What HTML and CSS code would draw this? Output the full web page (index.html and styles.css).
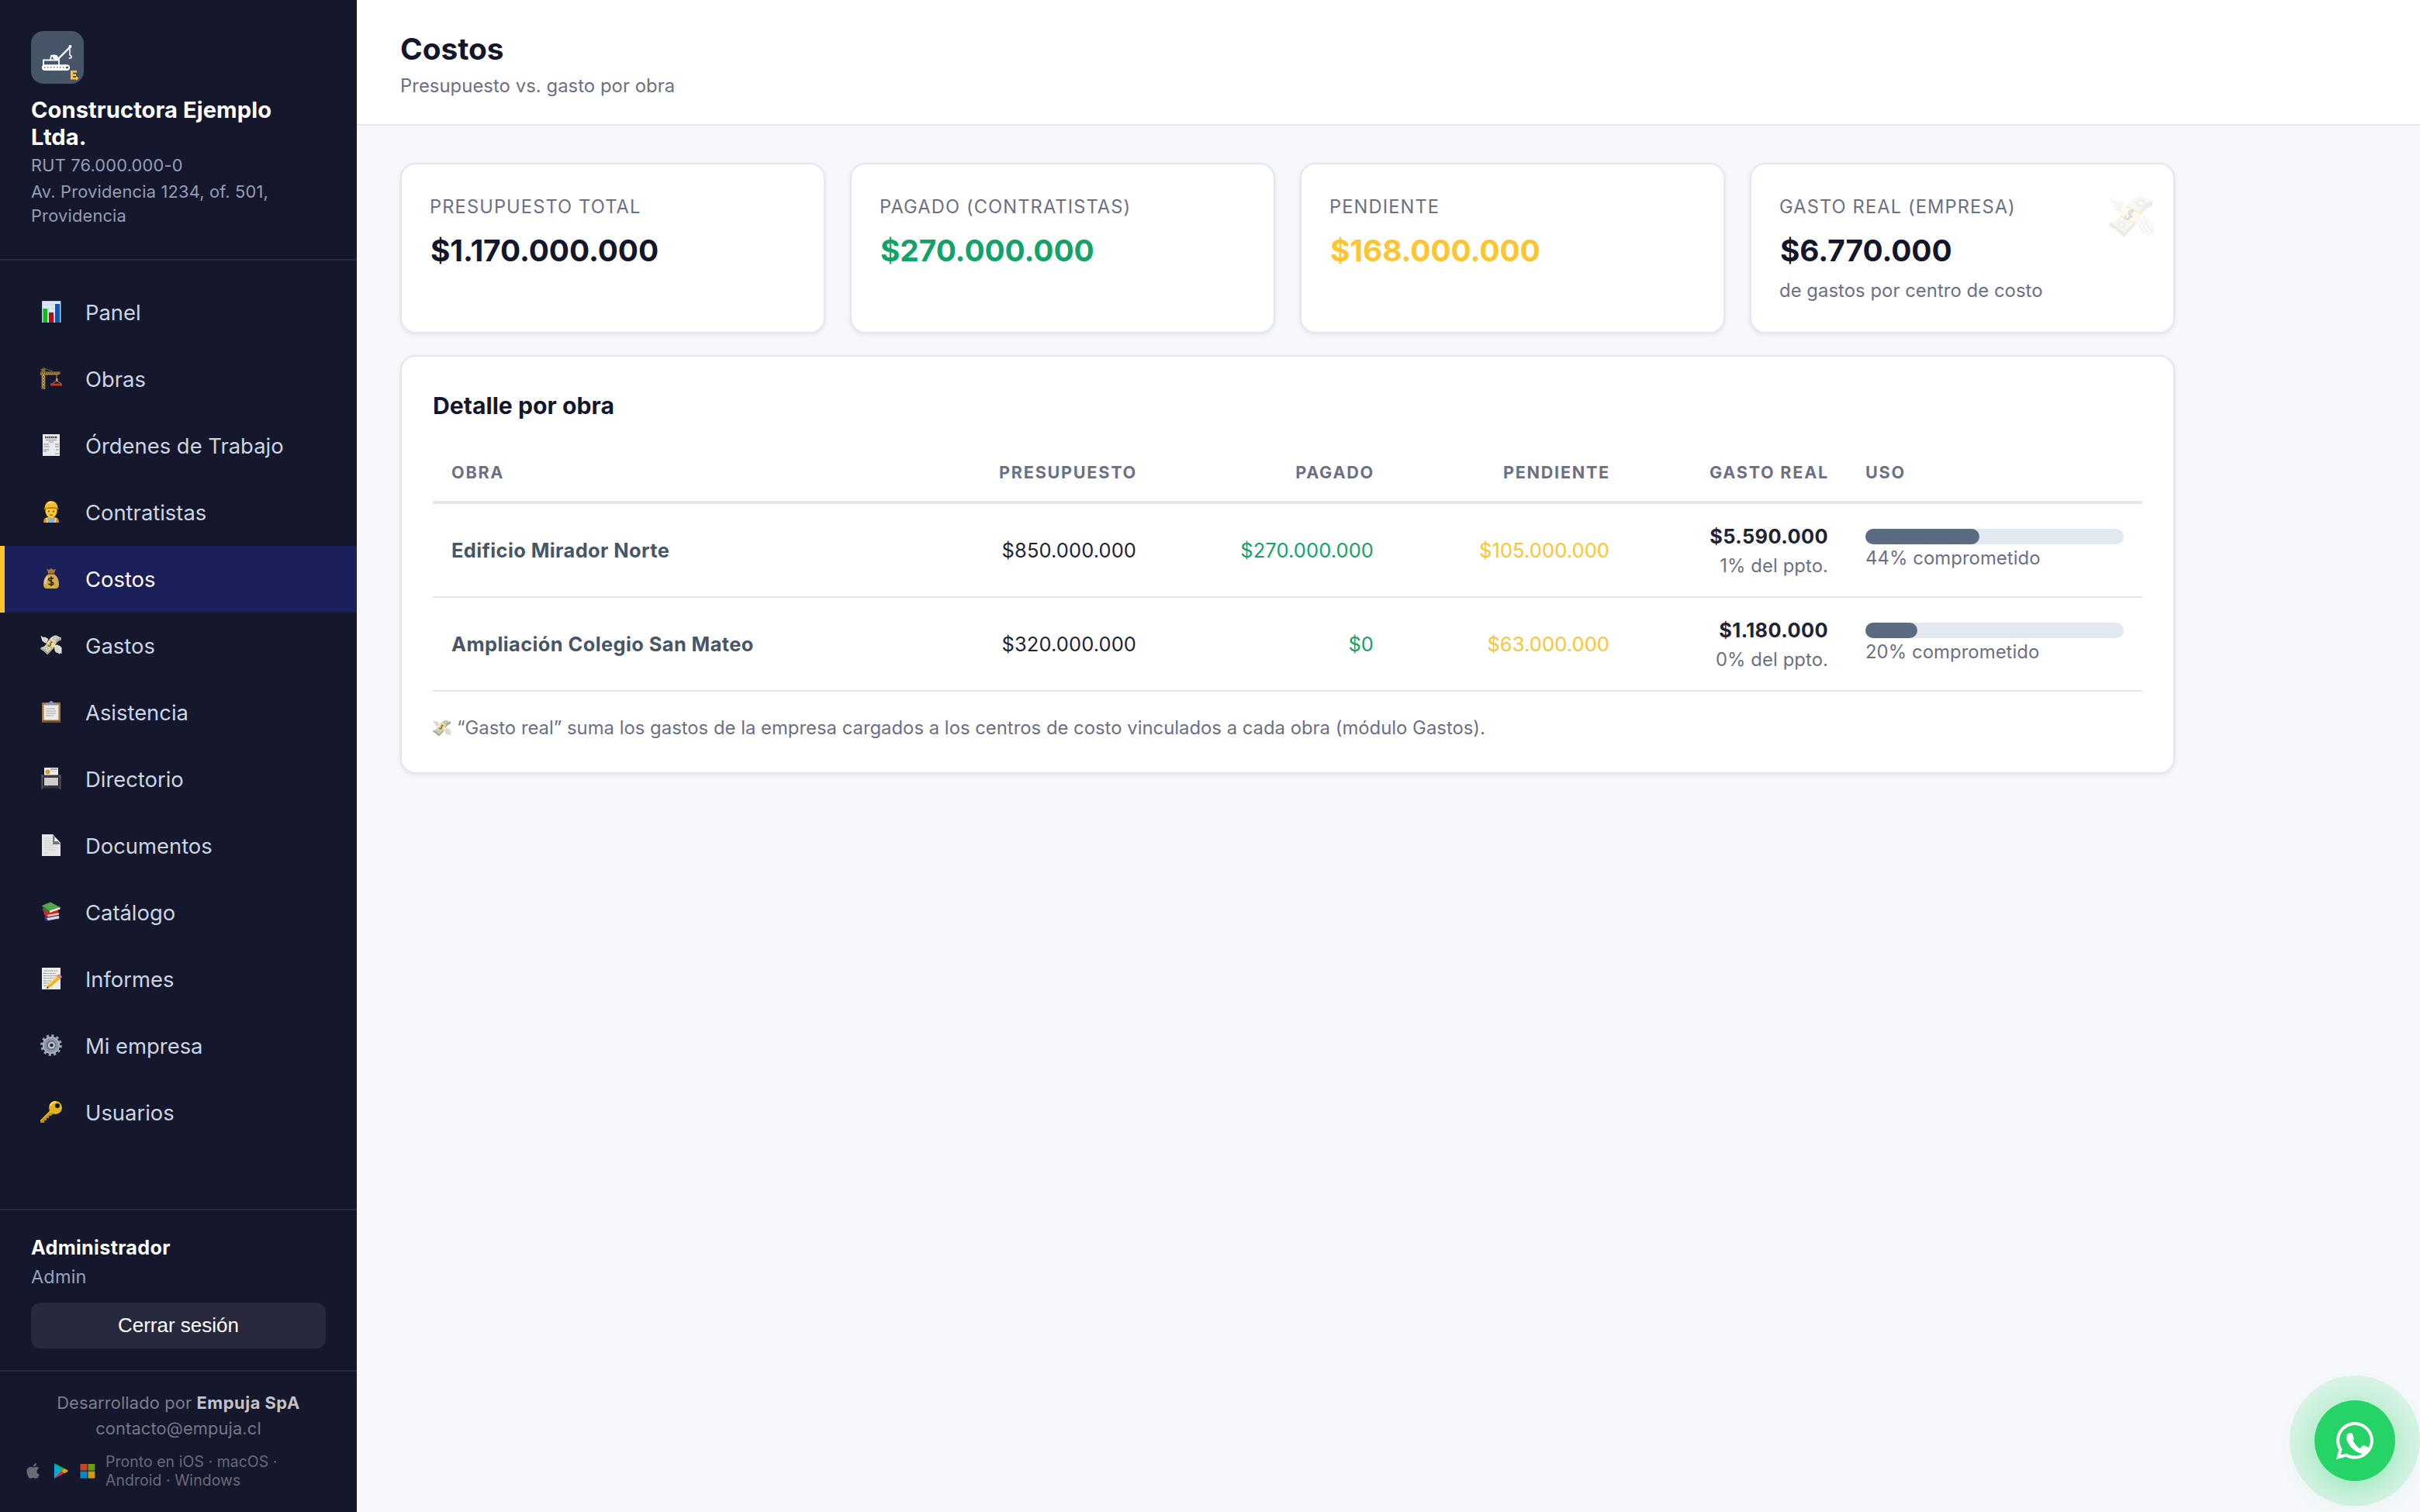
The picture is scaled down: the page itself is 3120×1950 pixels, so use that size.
FILE: index.html
```
<!DOCTYPE html>
<html lang="es">
<head>
<meta charset="utf-8">
<title>Costos</title>
<link rel="stylesheet" href="styles.css">
</head>
<body>
<svg class="defs" aria-hidden="true">
  <symbol id="money" viewBox="0 0 60 60">
    <path d="M1 4 8 8 14 8 22 13 18 24 12 24 9 21 5 18 4 14z" fill="#e4e3da"/>
    <path d="M5 10l12 4M8 15l9 3M11 20l7 1" stroke="#b5b3a5" stroke-width="1.2"/>
    <path d="M38 31 46 29 54 32 59 37 59 54 55 52 52 55 48 51 44 51 40 46z" fill="#e4e3da"/>
    <path d="M47 34l10 16M43 37l8 13M41 42l6 8" stroke="#b5b3a5" stroke-width="1.2"/>
    <path d="M24 15Q32 3 44 3Q52 8 57 9L57 16Q49 17 43 26z" fill="#d8dbcc"/>
    <path d="M57 9v7Q49 17 43 26l-2-3Q47 11 57 9z" fill="#a3a794"/>
    <ellipse cx="42" cy="12" rx="7" ry="5" fill="#b4bba4"/><circle cx="42" cy="12" r="2.6" fill="#e2e5d8"/>
    <path d="M15 29 35 40 20 56 Q12 47 1 41L2 36Q9 37 15 29z" fill="#d3d6c6"/>
    <path d="M20 56Q12 47 1 41L2 37Q13 42 20 50L33 38 35 40z" fill="#9da18e"/>
    <ellipse cx="17" cy="40" rx="6" ry="4.5" fill="#b4bba4"/><circle cx="17" cy="40" r="2.4" fill="#e2e5d8"/>
    <path d="M24 15 44 25 35 40 15 29z" fill="#eee2b4"/>
    <path d="M24 15 44 25 43 27.500 23 17zM16.500 26.500 36.500 37.500 35 40 15 29z" fill="#e9b93c"/>
    <path d="M33 23Q29 19 27 23T29 28T26 32T23 28M32 20 25 34" fill="none" stroke="#55503a" stroke-width="2"/>
  </symbol>
</svg>
<div class="app">
  <aside class="sidebar">
    <div class="brand">
      <svg class="logo" viewBox="0 0 68 68">
        <rect width="68" height="68" rx="16" fill="#475569"/>
        <g fill="none" stroke="#fff" stroke-width="1.800">
          <path d="M16 44V37.500H25L26 32Q29 31 33 32L36 37V44M25 37.500H36"/>
          <path d="M34 37 50 21" stroke-width="2.400"/>
          <path d="M50 20V31Q52.500 32 52 34Q50.500 36 49 34.500" stroke-width="1.500"/>
        </g>
        <circle cx="50.500" cy="20" r="2" fill="#fff"/><path d="M27 32h6l4 5-3 1-5-2z" fill="#fff"/>
        <rect x="14" y="43.300" width="36" height="7.700" rx="3.800" fill="#fff"/>
        <path d="M17 47h29" stroke="#8b95a3" stroke-width="2.200" stroke-dasharray="1.500 2.500"/>
        <circle cx="46.500" cy="47" r="1.600" fill="#475569"/>
        <path d="M51 51h8v2.600h-5v1.900h4v2.500h-4v2h4v-2l3.500 3-3.500 3v-1.400h-7z" fill="#ffc42e"/>
      </svg>
      <div class="brand-name">Constructora Ejemplo Ltda.</div>
      <div class="brand-rut">RUT 76.000.000-0</div>
      <div class="brand-address">Av. Providencia 1234, of. 501, Providencia</div>
    </div>
    <nav class="nav">
      <a class="nav-item"><svg class="ico" viewBox="0 0 28 28"><path d="M2 0h24v28H2z" fill="#dfe7f0"/><path d="M2 5h24M2 10h24M2 15h24M2 20h24" stroke="#c3d0df" stroke-width=".6"/><path d="M3.500 10H9v18H3.500z" fill="#12b81c"/><path d="M11 15h6v13h-6z" fill="#b80d12"/><path d="M19 4h6v24h-6z" fill="#0b59bd"/><path d="M2 .5h24V28M2.500 0v28" fill="none" stroke="#b9c4d3"/></svg>Panel</a>
      <a class="nav-item"><svg class="ico" viewBox="0 0 28 28"><path d="M1.500 28V2H6.500V28z" fill="#7d6235"/><path d="M2 8l4 4-4 4 4 4-4 4 4 3M6 8l-4 4 4 4-4 4 4 4" fill="none" stroke="#d0a95c" stroke-width=".9"/><path d="M0 5.500h25.500v3L22 9.500H0z" fill="#a6813f"/><path d="M1 7h23" stroke="#5d4726" stroke-dasharray="1 1.500" stroke-width="2"/><path d="M0 3 5 1 16 5M4 0v5" fill="none" stroke="#8b7850" stroke-width=".8"/><path d="M21 9v9M15 21l6-4 6 4" fill="none" stroke="#9a9a9a" stroke-width=".9"/><path d="M20 14h2.500v4H20z" fill="#c9a03a"/><path d="M13 20.500h15V23.500H13z" fill="#c4371d"/></svg>Obras</a>
      <a class="nav-item"><svg class="ico" viewBox="0 0 28 28"><path d="M3 0h22v28H3z" fill="#e9eaec"/><path d="M6 4h16" stroke="#4b4b50" stroke-width="2.600" stroke-dasharray="2 .6"/><path d="M7 7.500h14M11 10h6M4 13h7M19 13h5M4 16h8M19 16h5M4 20h7M20 20h4M4 22h4M19 25h5" stroke="#8c8c92" stroke-width="1.100"/></svg>Órdenes de Trabajo</a>
      <a class="nav-item"><svg class="ico" viewBox="0 0 28 28"><path d="M4 28Q4 21 10 21h8q6 0 6 7z" fill="#f08522"/><path d="M10 21h8l1 7H9z" fill="#76b9ec"/><path d="M8 22l1 6M20 22l-1 6" stroke="#f5ec54" stroke-width="1.600"/><path d="M11 18h6v4l-3 2-3-2z" fill="#e6a91c"/><path d="M6.500 9h15v5q-1 7-7.500 8-6.500-1-7.500-8z" fill="#fbc931"/><path d="M5.500 10Q6 0 14 0t8.500 10q-8.500-2-17 0z" fill="#f3bd24"/><path d="M4.500 9.500q9.500-3 19 0v1.500q-9.500-2-19 0z" fill="#bb7b14"/><path d="M10 3Q14 1 17 3" stroke="#ffe47c" stroke-width="1.500" fill="none"/><circle cx="11" cy="13.500" r="1" fill="#4d2d14"/><circle cx="17" cy="13.500" r="1" fill="#4d2d14"/><path d="M12 18.300h4" stroke="#a4420e" stroke-width="1.200"/></svg>Contratistas</a>
      <a class="nav-item active"><svg class="ico" viewBox="0 0 28 28"><path d="M8 1.500 11 3l3-2 3 2 3-1.500L17.500 8h-7z" fill="#a87b32"/><path d="M10.500 8h7Q24 13 24 21q0 6-4 6H8q-4 0-4-6 0-8 6.500-13z" fill="#d2ab49"/><path d="M9 12Q6 16 6.500 21" stroke="#f0d685" stroke-width="2" fill="none"/><path d="M10 8h8" stroke="#7b511a" stroke-width="1.800"/><path d="M17 14.500Q14 12.500 11.500 14T13.500 17.700T16.500 21.500T10.500 21M14 11.500V24" fill="none" stroke="#30291b" stroke-width="1.700"/></svg>Costos</a>
      <a class="nav-item"><svg class="ico" viewBox="0 0 60 60"><use href="#money"/></svg>Gastos</a>
      <a class="nav-item"><svg class="ico" viewBox="0 0 28 28"><path d="M2 2h24v26H2z" fill="#a8763a"/><path d="M2 25.500h24V28H2z" fill="#7d4f1d"/><path d="M4.500 5h19v19.500h-19z" fill="#ebebeb"/><path d="M7 10h12M7 13h13M7 16h13M7 19h10" stroke="#c9c9c9" stroke-width="2"/><path d="M6 5.500V3.500Q8 1.500 11.500 2q.5-2 2.500-2t2.500 2Q20 1.500 22 3.500v2z" fill="#8a93a8"/></svg>Asistencia</a>
      <a class="nav-item"><svg class="ico" viewBox="0 0 28 28"><path d="M5 0h18v12H5z" fill="#f0eff0"/><circle cx="9.500" cy="5.500" r="3" fill="#e39a1c"/><path d="M13 2h9" stroke="#686868"/><path d="M14 5h7" stroke="#c8c8c8"/><path d="M5 12h18v12H5z" fill="#cfccd0"/><path d="M1 9.500h26v3.500H1z" fill="#3a3a3d"/><path d="M2.500 9v18.500M25.500 9v18.500" stroke="#54555a" stroke-width="2"/><path d="M4 23h20v3.500H4z" fill="#37373a"/></svg>Directorio</a>
      <a class="nav-item"><svg class="ico" viewBox="0 0 28 28"><path d="M2 0h14l10 11v17H2z" fill="#e6e6e7"/><path d="M5 5h8M5 8h8M5 11h9M5 14h17M5 17h17M5 20h15M5 24h5" stroke="#cfcfd0" stroke-width="1"/><path d="M16 0 26 13H16z" fill="#77777a"/><path d="M15 0Q20 2 18 9 24 8 26 11z" fill="#fafafa"/></svg>Documentos</a>
      <a class="nav-item"><svg class="ico" viewBox="0 0 28 28"><path d="M2 10 5 9 25 20v3L9 26Q4 24 6 20z" fill="#303e90"/><path d="M8 22 24 19v3.500L10 25z" fill="#dcdcdf"/><path d="M4 9h19v6l1 3-15 3.500Q4 18 4 9z" fill="#d9261d"/><path d="M9 18 24 15.500v2L10 20z" fill="#e9e7e5"/><path d="M2 6 13 1.500 25.500 8 12 13z" fill="#52a84a"/><path d="M2 6 12 13v3Q3 11 2 6z" fill="#2e7a2e"/><path d="M12 12.500 25.500 8v2.500L12 15z" fill="#efefe8"/></svg>Catálogo</a>
      <a class="nav-item"><svg class="ico" viewBox="0 0 28 28"><path d="M2 0h24v28H2z" fill="#ececec"/><path d="M5 4h17M4 7.500h16M4 10.500h18M4 13.500h13M4 17h10M4 20h7M4 23h5" stroke="#98989b" stroke-width="1.100" stroke-dasharray="4 .8 2 .7"/><path d="M8 27 10.500 21 21 10.500 25 14.500 14 24.500z" fill="#eeb021"/><path d="M10.500 21 21 10.500l1.500 1.500L12 22.500z" fill="#ffd552"/><path d="M8 27 9 24l2 2z" fill="#333"/><path d="M21 10.500 23 8.500Q25 8 27 10.500T26.500 13L25 14.500z" fill="#e8808a"/></svg>Informes</a>
      <a class="nav-item"><svg class="ico" viewBox="0 0 28 28"><circle cx="14" cy="14" r="12.300" fill="none" stroke="#97a1ae" stroke-width="3.200" stroke-dasharray="3.200 3.240"/><circle cx="14" cy="14" r="8.500" fill="none" stroke="#8c95a2" stroke-width="5"/><circle cx="14" cy="14" r="10.300" fill="none" stroke="#b3bcc7" stroke-width="1.200"/><circle cx="14" cy="14" r="6" fill="#6d7783"/><circle cx="14.500" cy="14" r="4.600" fill="#b9c4cf"/><circle cx="14.500" cy="14" r="2.300" fill="#22283a"/></svg>Mi empresa</a>
      <a class="nav-item"><svg class="ico" viewBox="0 0 28 28"><path d="M13 12 0 25v3h5v-3h3v-3h3v-3h3l4-4z" fill="#c08d10"/><path d="M13 12 0 25v1L15 13z" fill="#ecc52c"/><circle cx="19.500" cy="8.500" r="8.500" fill="#e3b317"/><path d="M12.500 6Q15 1 20 1.200" fill="none" stroke="#ffe25a" stroke-width="2"/><circle cx="22" cy="6" r="3" fill="#15182d"/></svg>Usuarios</a>
    </nav>
    <div class="user">
      <div class="user-name">Administrador</div>
      <div class="user-role">Admin</div>
      <button class="logout">Cerrar sesión</button>
    </div>
    <div class="credits">
      <div class="credit-line">Desarrollado por <b>Empuja SpA</b></div>
      <div class="credit-line mail">contacto@empuja.cl</div>
      <div class="stores">
        <svg viewBox="0 0 20 20" width="20" height="20"><path d="M14.500 10.500c0-2 1-3 2.800-4-1-1.500-2.500-1.800-3.600-1.800-1.500 0-2.700.9-3.500.9S8 4.700 6.700 4.700C3.800 4.800 1.500 7 1.500 10.800c0 4 2.700 9 5 9 1.200 0 1.900-.8 3.500-.8s2.200.8 3.500.8c2 0 3.600-3 4.300-5-2-.8-3.300-2.200-3.300-4.300zM12.800 3.200C13.700 2.200 14 1 14 0c-2.500.4-4.200 2.300-4 4.500 1.100 0 2.100-.5 2.800-1.300z" fill="#696b77"/></svg>
        <svg viewBox="0 0 20 20" width="20" height="20"><path d="M2 0 12 10 2 20z" fill="#08a9d6"/><path d="M2 0 15 7l-3.500 3.500z" fill="#0bb863"/><path d="M2 20 15 13l-3.500-3.500z" fill="#cf3142"/><path d="M15 6.800 19 9q1.500 1 0 2l-4 2.300L11.500 10z" fill="#d9a70c"/></svg>
        <svg viewBox="0 0 20 20" width="20" height="20"><path d="M.5 1h9v8.500h-9z" fill="#c84524"/><path d="M10.500 1h8.800v8.500h-8.800z" fill="#6a9e0c"/><path d="M.5 10.500h9v9h-9z" fill="#0786c8"/><path d="M10.500 10.500h8.800v9h-8.800z" fill="#d29a0b"/></svg>
        <div class="stores-text">Pronto en iOS · macOS ·<br>Android · Windows</div>
      </div>
    </div>
  </aside>

  <main class="main">
    <header class="header">
      <h1>Costos</h1>
      <p>Presupuesto vs. gasto por obra</p>
    </header>
    <div class="content">
      <section class="stats">
        <div class="stat"><div class="label">Presupuesto total</div><div class="value">$1.170.000.000</div></div>
        <div class="stat"><div class="label">Pagado (contratistas)</div><div class="value green">$270.000.000</div></div>
        <div class="stat"><div class="label">Pendiente</div><div class="value yellow">$168.000.000</div></div>
        <div class="stat"><div class="label">Gasto real (empresa)</div><div class="value">$6.770.000</div><div class="hint">de gastos por centro de costo</div><svg class="watermark" viewBox="0 0 60 60"><use href="#money"/></svg></div>
      </section>
      <section class="panel">
        <h2>Detalle por obra</h2>
        <table>
          <colgroup><col class="c-obra"><col class="c-ppto"><col class="c-pag"><col class="c-pend"><col class="c-real"><col class="c-uso"></colgroup>
          <thead><tr><th>Obra</th><th class="r">Presupuesto</th><th class="r">Pagado</th><th class="r">Pendiente</th><th class="r">Gasto real</th><th>Uso</th></tr></thead>
          <tbody>
            <tr><td class="name">Edificio Mirador Norte</td><td class="r">$850.000.000</td><td class="r green">$270.000.000</td><td class="r yellow">$105.000.000</td><td class="r"><div class="real">$5.590.000</div><div class="small">1% del ppto.</div></td><td><div class="bar"><div class="fill" style="width:44%"></div></div><div class="small">44% comprometido</div></td></tr>
            <tr><td class="name">Ampliación Colegio San Mateo</td><td class="r">$320.000.000</td><td class="r green">$0</td><td class="r yellow">$63.000.000</td><td class="r"><div class="real">$1.180.000</div><div class="small">0% del ppto.</div></td><td><div class="bar"><div class="fill" style="width:20%"></div></div><div class="small">20% comprometido</div></td></tr>
          </tbody>
        </table>
        <p class="note"><svg viewBox="0 0 60 60" width="24" height="24"><use href="#money"/></svg><span>“Gasto real” suma los gastos de la empresa cargados a los centros de costo vinculados a cada obra (módulo Gastos).</span></p>
      </section>
    </div>
  </main>
</div>
<a class="whatsapp"><svg viewBox="0 32 448 448" width="48" height="48" fill="#fff"><path d="M380.900 97.100C339 55.100 283.200 32 223.900 32c-122.400 0-222 99.600-222 222 0 39.100 10.200 77.300 29.600 111L0 480l117.700-30.900c32.400 17.700 68.900 27 106.100 27h.1c122.300 0 224.100-99.600 224.100-222 0-59.300-25.200-115-67.100-157zm-157 341.600c-33.200 0-65.700-8.900-94-25.700l-6.700-4-69.800 18.300L72 359.200l-4.400-7c-18.500-29.400-28.200-63.300-28.200-98.200 0-101.700 82.800-184.500 184.600-184.500 49.300 0 95.600 19.200 130.400 54.100 34.800 34.900 56.200 81.200 56.100 130.500 0 101.800-84.900 184.600-186.600 184.600z"/><path d="M170 162Q124 166 121 215Q121 268 172 328Q225 388 290 408Q338 422 368 392L402 346Q352 312 323 314Q310 318 286 349Q248 330 205 262Q204 250 212 232Q208 200 190 168Q184 160 170 162z"/></svg></a>
</body>
</html>
```
FILE: styles.css
```
* { box-sizing: border-box; margin: 0; padding: 0; }

body {
  font-family: Inter, "Liberation Sans", sans-serif;
  background: #f7f8fc;
  color: #1f2336;
}

.defs { display: none; }

.app { display: flex; height: 1950px; }

/* Sidebar */
.sidebar {
  width: 460px;
  flex: none;
  display: flex;
  flex-direction: column;
  background: #15182d;
}

.brand {
  height: 336px;
  padding: 40px 40px 0;
  border-bottom: 2px solid rgba(255, 255, 255, .08);
}
.logo { display: block; width: 68px; height: 68px; }
.brand-name {
  margin-top: 16px;
  font-size: 29.1px;
  font-weight: 700;
  line-height: 35px;
  letter-spacing: .08px;
  color: #fff;
}
.brand-rut, .brand-address {
  font-size: 21.8px;
  letter-spacing: .2px;
  color: #949db3;
}
.brand-rut { margin-top: 2px; line-height: 34px; }
.brand-address { margin-top: 2px; line-height: 31px; }

.nav { padding-top: 24px; }
.nav-item {
  display: flex;
  align-items: center;
  gap: 30px;
  height: 86px;
  padding-left: 46px;
  border-left: 6px solid transparent;
  font-size: 27.4px;
  letter-spacing: 0;
  color: #cbd5e1;
}
.nav-item.active {
  background: #1b205a;
  border-left-color: #ffc42e;
  color: #fff;
}
.ico { width: 28px; height: 28px; flex: none; margin-bottom: 2px; }

.user {
  margin-top: auto;
  padding: 32px 40px 28px;
  border-top: 2px solid rgba(255, 255, 255, .08);
}
.user-name {
  font-size: 25.2px;
  font-weight: 700;
  line-height: 32px;
  letter-spacing: .3px;
  color: #fff;
}
.user-role {
  margin-top: 4px;
  font-size: 23.5px;
  line-height: 36px;
  letter-spacing: .15px;
  color: #94a3b8;
}
.logout {
  display: block;
  width: 100%;
  height: 59px;
  margin-top: 15px;
  border: 0;
  border-radius: 12px;
  background: rgba(255, 255, 255, .08);
  font: 26px "Liberation Sans", sans-serif;
  color: #fff;
}

.credits {
  height: 183px;
  padding-top: 24px;
  border-top: 2px solid rgba(255, 255, 255, .08);
}
.credit-line {
  text-align: center;
  font-size: 21.8px;
  line-height: 33px;
  letter-spacing: .15px;
  color: #7c7e8a;
}
.credit-line b { font-weight: 700; letter-spacing: .55px; color: #c1c2c8; }
.credit-line.mail { color: #757783; }
.stores {
  display: flex;
  align-items: center;
  gap: 15px;
  margin-top: 14px;
  padding-left: 33px;
}
.stores-text {
  margin-left: -2px;
  font-size: 19.4px;
  line-height: 24px;
  letter-spacing: .08px;
  color: #686a77;
}

/* Main column */
.main { flex: 1; min-width: 0; }
.header {
  height: 162px;
  padding: 40px 56px 0;
  background: #fff;
  border-bottom: 2px solid #e4e7f0;
}
.header h1 {
  font-size: 38.8px;
  font-weight: 700;
  line-height: 46px;
  letter-spacing: 0;
  color: #14172b;
}
.header p {
  margin-top: 7px;
  font-size: 23.8px;
  line-height: 36px;
  letter-spacing: .07px;
  color: #6b7085;
}

.content { max-width: 2400px; padding: 48px 56px; }

.stats { display: grid; grid-template-columns: repeat(4, 1fr); gap: 32px; }
.stat, .panel {
  background: #fff;
  border: 2px solid #e4e7f0;
  border-radius: 20px;
  box-shadow: 0 2px 6px rgba(20, 23, 43, .08);
}
.stat { position: relative; height: 220px; padding: 37px 36px 0; }
.label {
  font-size: 23.6px;
  line-height: 36px;
  letter-spacing: 1.15px;
  text-transform: uppercase;
  color: #6b7085;
}
.value {
  margin-top: 14px;
  padding-left: 1px;
  font-size: 38.8px;
  font-weight: 700;
  line-height: 48px;
  letter-spacing: -.05px;
  color: #14172b;
}
.hint {
  margin-top: 10px;
  font-size: 23.8px;
  line-height: 36px;
  letter-spacing: .07px;
  color: #6b7085;
}
.green, .value.green { color: #12a36b; }
.yellow, .value.yellow { color: #ffc42e; }
.watermark {
  position: absolute;
  top: 38px;
  right: 24px;
  width: 60px;
  height: 60px;
  opacity: .2;
}

.panel { height: 540px; margin-top: 28px; padding: 40px; }
.panel h2 {
  font-size: 30.2px;
  font-weight: 700;
  line-height: 46px;
  color: #14172b;
}

table {
  width: 100%;
  margin-top: 26px;
  table-layout: fixed;
  border-collapse: separate;
  border-spacing: 0;
}
.c-obra { width: 631px; }
.c-ppto { width: 300px; }
.c-pag { width: 306px; }
.c-pend { width: 304px; }
.c-real { width: 282px; }
.c-uso { width: 381px; }
th {
  height: 78px;
  padding: 0 24px;
  border-bottom: 4px solid #e4e7f0;
  font-size: 21.6px;
  font-weight: 650;
  letter-spacing: 1.75px;
  text-align: left;
  text-transform: uppercase;
  white-space: nowrap;
  color: #6b7085;
}
th.r { padding-right: 23px; }
td {
  height: 121px;
  padding: 0 24px;
  border-bottom: 2px solid #e4e7f0;
  font-size: 25.4px;
  letter-spacing: .15px;
  vertical-align: middle;
  white-space: nowrap;
}
.r { text-align: right; }
.name { font-weight: 700; letter-spacing: .42px; color: #475569; }
.real { font-weight: 700; line-height: 40px; letter-spacing: .4px; }
.small { font-size: 23.8px; line-height: 36px; letter-spacing: .1px; color: #6b7085; }
.bar { height: 20px; border-radius: 10px; background: #e2e8f0; }
.fill { height: 20px; border-radius: 10px; background: #5b6b82; }

.note {
  display: flex;
  align-items: center;
  gap: 7px;
  margin-top: 28px;
  font-size: 23.8px;
  line-height: 38px;
  letter-spacing: .03px;
  color: #6b7085;
}

/* Floating chat button */
.whatsapp {
  position: fixed;
  right: 32px;
  bottom: 40px;
  width: 104px;
  height: 104px;
  display: flex;
  align-items: center;
  justify-content: center;
  border-radius: 50%;
  background: #25d366;
  box-shadow: 0 0 0 32px rgba(37, 211, 102, .14), 0 8px 48px rgba(37, 211, 102, .45);
}
```
